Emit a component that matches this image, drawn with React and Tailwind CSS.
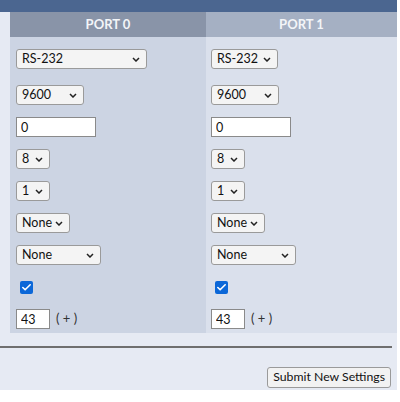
import { Check } from "lucide-react";

const font = { fontFamily: 'Lato, "Noto Sans", Arial, sans-serif' };

function Chevron() {
  return (
    <svg width="8" height="5" viewBox="0 0 8 5" className="pointer-events-none absolute right-[7px] top-[8px]">
      <path d="M1 1l3 3 3-3" fill="none" stroke="#222" strokeWidth="1.5" />
    </svg>
  );
}

function Select({ value, width, className = "" }) {
  return (
    <div className={`relative h-[20px] ${className}`} style={{ width }}>
      <select
        defaultValue={value}
        className="block h-[20px] w-full appearance-none rounded-[3px] border border-[#9a9a9a] bg-[#f4f4f4] pl-[5px] text-[12.5px] leading-[18px] text-[#111]"
      >
        <option>{value}</option>
      </select>
      <Chevron />
    </div>
  );
}

function TextBox({ value, width }) {
  return (
    <input
      defaultValue={value}
      className="block h-[20px] border border-[#8a8a8a] bg-white px-[4px] text-[12.5px] leading-[18px] text-[#111]"
      style={{ width }}
    />
  );
}

function Port({ label, head, body, wide, pad }) {
  return (
    <div className={`flex flex-col ${body}`}>
      <div className={`flex h-[25px] items-center justify-center text-[13px] font-bold text-[#f3f5f8] ${head}`}>{label}</div>
      <div className={`flex flex-col gap-[12px] pb-[4px] pt-[12px] ${pad}`}>
        <Select value="RS-232" width={wide ? 131 : 67} className="mb-[4px]" />
        <Select value="9600" width={68} />
        <TextBox value="0" width={80} />
        <Select value="8" width={34} />
        <Select value="1" width={34} />
        <Select value="None" width={54} />
        <Select value="None" width={85} />
        <div className="flex h-[20px] items-center pl-[4px]">
          <span className="flex h-[13px] w-[13px] items-center justify-center rounded-[2px] bg-[#0b67d8]">
            <Check size={11} strokeWidth={3.5} color="#fff" />
          </span>
        </div>
        <div className="flex h-[20px] items-center gap-[6px]">
          <TextBox value="43" width={34} />
          <span className="text-[13px] text-[#333]">( + )</span>
        </div>
      </div>
    </div>
  );
}

export default function App() {
  return (
    <div className="h-[402px] w-[400px] bg-white" style={font}>
      <div className="w-[397px] bg-[#e6eaf3] pb-[2px]">
        <div className="h-[12px] bg-[#4b6690]" />
        <div className="flex">
          <div className="w-[10px]" />
          <div className="grid flex-1 grid-cols-[196px_1fr]">
            <Port label="PORT 0" head="bg-[#8994a8]" body="bg-[#ccd4e3]" pad="px-[6px]" wide />
            <Port label="PORT 1" head="bg-[#a5b0c3]" body="bg-[#dae0ec]" pad="px-[5px]" />
          </div>
        </div>
        <div className="mr-[5px] mt-[13px] h-[2px] bg-[#6f6f6f]" />
        <div className="flex justify-end pr-[6px] pt-[19px]">
          <button className="h-[21px] rounded-[3px] border border-[#9a9a9a] bg-[#f2f2f2] px-[5px] text-[12.25px] text-[#111]">
            Submit New Settings
          </button>
        </div>
      </div>
    </div>
  );
}
